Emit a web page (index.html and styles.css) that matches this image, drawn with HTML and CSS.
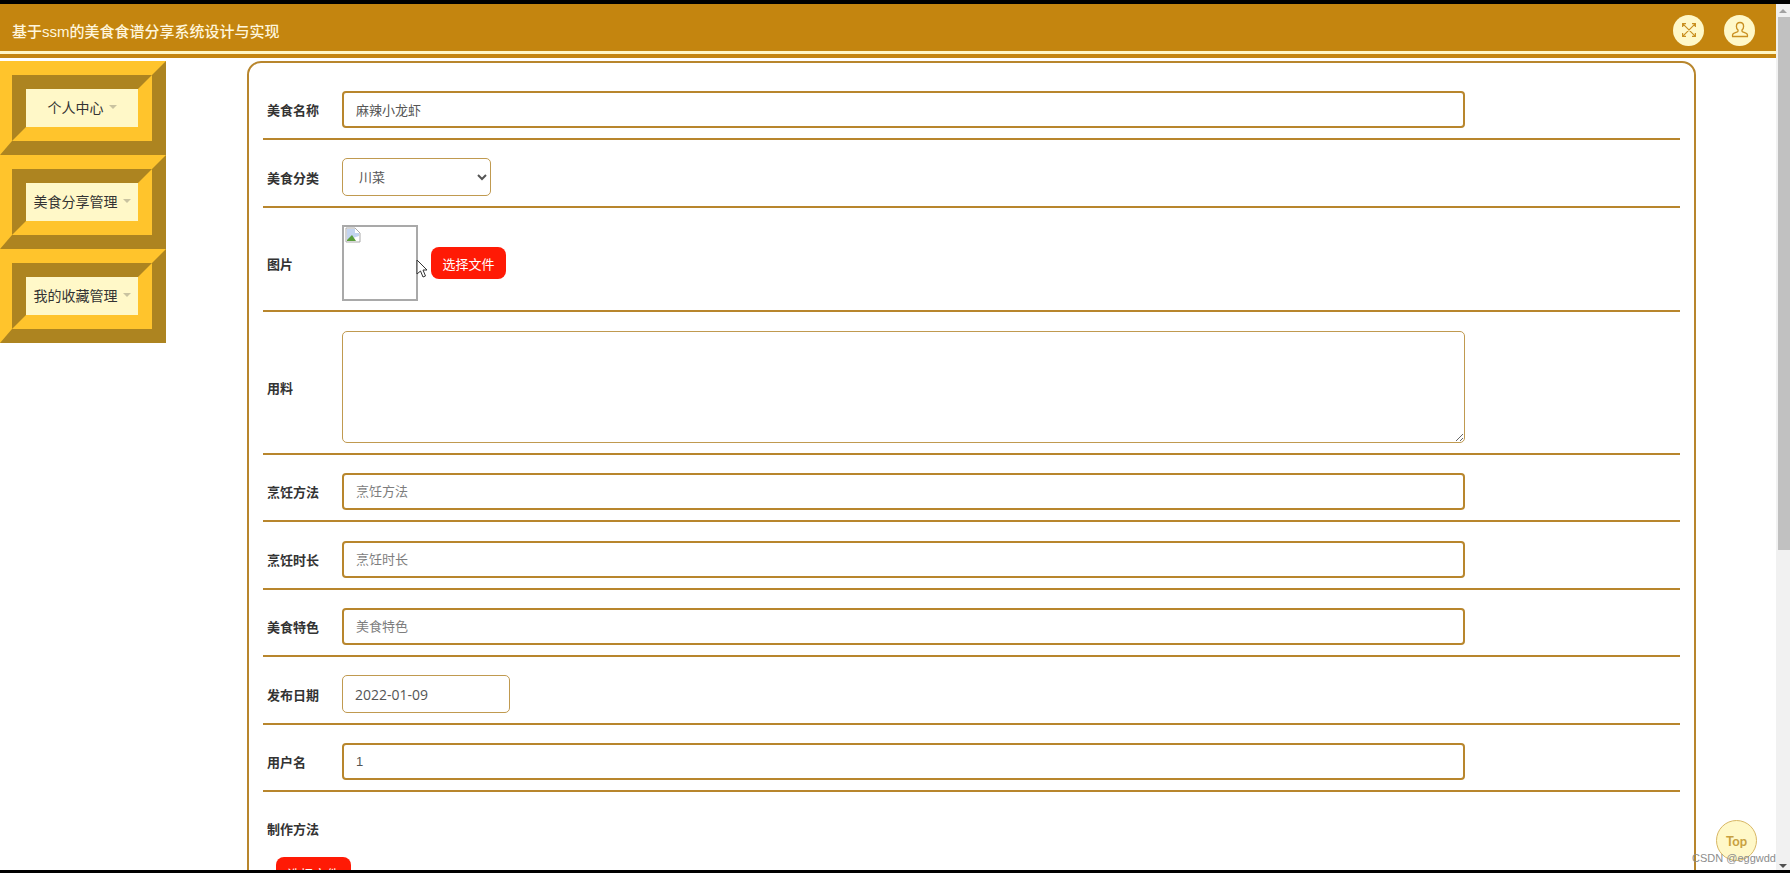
FILE: index.html
```html
<!DOCTYPE html>
<html lang="en">
<head>
    <meta charset="UTF-8">
    <meta name="viewport" content="width=device-width, initial-scale=1.0">
    <title>美食食谱分享系统</title>
    <link rel="stylesheet" href="styles.css">
</head>
<body>
    <div class="screen">
        <div class="page">
            <div class="viewport">
                <header class="topbar">
                    <div class="brand">基于ssm的美食食谱分享系统设计与实现</div>
                    <div class="top-actions">
                        <span class="round-icon">
                            <svg viewBox="0 0 24 24" width="18" height="18"><path d="M3.500 3.500l17 17M20.500 3.500l-17 17M3.500 8V3.500H8M16 3.500h4.500V8M3.500 16v4.500H8M20.500 16v4.500H16"/></svg>
                        </span>
                        <span class="round-icon">
                            <svg viewBox="0 0 24 24" width="20" height="20"><path d="M12 3c-2.600 0-4.300 2-4.300 4.700 0 1.900.8 3.400 1.900 4.400v1.400c0 1-4.900 1.700-6.100 3.300-.6.900-.6 2-.4 3h17.800c.2-1 .2-2.100-.4-3-1.200-1.600-6.100-2.300-6.100-3.300v-1.400c1.100-1 1.900-2.500 1.900-4.400C16.300 5 14.600 3 12 3z"/></svg>
                        </span>
                    </div>
                </header>
                <div class="topbar-stripe"></div>

                <div class="layout">
                    <nav class="sidebar">
                        <div class="menu-item"><div class="menu-inner"><div class="menu-label">个人中心<span class="caret"></span></div></div></div>
                        <div class="menu-item"><div class="menu-inner"><div class="menu-label">美食分享管理<span class="caret"></span></div></div></div>
                        <div class="menu-item"><div class="menu-inner"><div class="menu-label">我的收藏管理<span class="caret"></span></div></div></div>
                    </nav>

                    <main class="card">
                        <div class="row row-first">
                            <label class="row-label">美食名称</label>
                            <input class="field" type="text" value="麻辣小龙虾">
                        </div>
                        <div class="row">
                            <label class="row-label">美食分类</label>
                            <select class="field-thin select-box">
                                <option>川菜</option>
                            </select>
                        </div>
                        <div class="row row-image">
                            <label class="row-label">图片</label>
                            <div class="image-box">
                                <svg class="broken-img" viewBox="0 0 16 16" width="16" height="16">
                                    <path d="M1 1h9l5 5v9H1z" fill="#fff" stroke="#a9a9a9"/>
                                    <path d="M2 2h8v4h4v3L2 13z" fill="#c3d4ef"/>
                                    <path d="M2 14v-1l5-5 4 6z" fill="#5a9e3d"/>
                                </svg>
                            </div>
                            <button class="upload-btn" type="button">选择文件</button>
                            <svg class="mouse-cursor" viewBox="0 0 12 19" width="12" height="19">
                                <path d="M1 1v14l3.500-3 2.500 6 2.500-1-2.500-6H11z" fill="#fff" stroke="#333" stroke-width="1"/>
                            </svg>
                        </div>
                        <div class="row row-textarea">
                            <label class="row-label">用料</label>
                            <textarea class="field-thin text-box"></textarea>
                        </div>
                        <div class="row">
                            <label class="row-label">烹饪方法</label>
                            <input class="field" type="text" placeholder="烹饪方法">
                        </div>
                        <div class="row">
                            <label class="row-label">烹饪时长</label>
                            <input class="field" type="text" placeholder="烹饪时长">
                        </div>
                        <div class="row">
                            <label class="row-label">美食特色</label>
                            <input class="field" type="text" placeholder="美食特色">
                        </div>
                        <div class="row">
                            <label class="row-label">发布日期</label>
                            <input class="field-thin date-box" type="text" value="2022-01-09">
                        </div>
                        <div class="row">
                            <label class="row-label">用户名</label>
                            <input class="field" type="text" value="1">
                        </div>
                        <div class="row-editor">
                            <label class="row-label">制作方法</label>
                            <button class="upload-btn upload-editor" type="button">选择文件</button>
                        </div>
                    </main>
                </div>

                <a class="back-top">Top</a>
                <div class="watermark">CSDN @eggwdd</div>
            </div>

            <div class="scrollbar">
                <span class="arrow arrow-up"></span>
                <div class="thumb"></div>
                <span class="arrow arrow-down"></span>
            </div>
        </div>
    </div>
</body>
</html>
```

FILE: styles.css
```css
* {
    box-sizing: border-box;
}
html, body {
    margin: 0;
    padding: 0;
    height: 100%;
    overflow: hidden;
}
body {
    font-family: "Liberation Sans", "Noto Sans CJK SC", sans-serif;
    background: #000;
    color: #333;
}
.screen {
    height: 873px;
    padding: 4px 0 3px;
    background: #000;
}
.page {
    display: flex;
    height: 100%;
    background: #fff;
}
.viewport {
    position: relative;
    flex: 1;
    min-width: 0;
    overflow: hidden;
}

/* top bar */
.topbar {
    display: flex;
    justify-content: space-between;
    align-items: center;
    height: 47px;
    padding: 5px 21px 0 12px;
    background: #c4850f;
}
.brand {
    font-size: 15px;
    font-weight: 500;
    color: #fff6dc;
}
.top-actions {
    display: flex;
    gap: 20px;
}
.round-icon {
    display: flex;
    align-items: center;
    justify-content: center;
    width: 31px;
    height: 31px;
    border-radius: 50%;
    background: #fff8c8;
}
.round-icon svg {
    fill: none;
    stroke: #c98f20;
    stroke-width: 1.6;
}
.topbar-stripe {
    height: 7px;
    border-top: 3px solid #fff6c4;
    background: #c4850f;
}

/* sidebar + form */
.layout {
    display: flex;
    align-items: flex-start;
    padding-top: 3px;
}
.sidebar {
    flex: 0 0 247px;
}
.menu-item {
    width: 166px;
    height: 94px;
    border-style: solid;
    border-width: 14px;
    border-left-width: 12px;
    border-color: #ffc42c #ad8420 #ad8420 #ffc42c;
}
.menu-inner {
    height: 100%;
    border: 14px solid;
    border-color: #ad8420 #ffc42c #ffc42c #ad8420;
}
.menu-label {
    display: flex;
    align-items: center;
    justify-content: center;
    height: 100%;
    padding-bottom: 3px;
    background: #fff8c8;
    font-size: 14px;
    color: #333;
}
.caret {
    margin-left: 5px;
    border-style: solid;
    border-width: 4px 4px 0;
    border-color: #c9c3a0 transparent transparent;
}
.card {
    width: 1449px;
    height: 900px;
    padding: 0 14px;
    border: 2px solid #b8862d;
    border-radius: 14px;
    background: #fff;
}
.row {
    display: flex;
    align-items: center;
    height: 67.500px;
    padding-top: 9px;
    border-bottom: 2px solid #b8862d;
}
.row-first {
    height: 77px;
    padding-top: 18px;
}
.row-image {
    position: relative;
    height: 104px;
    padding-top: 9px;
}
.row-textarea {
    height: 143px;
    padding-top: 10px;
}
.row-label {
    flex: 0 0 79px;
    padding-left: 4px;
    font-size: 13px;
    font-weight: 700;
    color: #333;
}
.field {
    width: 1123px;
    height: 37px;
    padding: 0 12px;
    border: 2px solid #b8862d;
    border-radius: 4px;
    background: #fff;
    font: 13px "Liberation Sans", "Noto Sans CJK SC", sans-serif;
    color: #555;
    outline: none;
}
.field::placeholder {
    color: #7d7d7d;
}
.field-thin {
    border: 1px solid #c09a50;
    border-radius: 5px;
    background: #fff;
    font: 13px "Liberation Sans", "Noto Sans CJK SC", sans-serif;
    color: #555;
    outline: none;
}
.select-box {
    width: 149px;
    height: 38px;
    padding-left: 12px;
}
.text-box {
    display: block;
    width: 1123px;
    height: 112px;
}
.date-box {
    width: 168px;
    height: 38px;
    padding: 0 12px;
    font: 14px "Open Sans", sans-serif;
}
.image-box {
    position: relative;
    width: 76px;
    height: 76px;
    border: 2px solid #a9a9a9;
}
.broken-img {
    position: absolute;
    top: 0;
    left: 1px;
}
.upload-btn {
    height: 32px;
    width: 75px;
    margin-left: 13px;
    padding: 0;
    border: none;
    border-radius: 8px;
    background: #ff1a05;
    font: 13px "Liberation Sans", "Noto Sans CJK SC", sans-serif;
    color: #fff;
}
.mouse-cursor {
    position: absolute;
    top: 51px;
    left: 153px;
}
.row-editor {
    padding-top: 27px;
}
.row-editor .row-label {
    display: block;
}
.upload-editor {
    display: block;
    margin: 19px 0 0 13px;
}

/* floating bits */
.back-top {
    position: absolute;
    right: 19px;
    bottom: 9px;
    display: flex;
    align-items: center;
    justify-content: center;
    width: 41px;
    height: 41px;
    border: 1px solid #d8b765;
    border-radius: 50%;
    background: #fff8c8;
    font: 700 13px Lato, sans-serif;
    color: #c8a040;
}
.watermark {
    position: absolute;
    right: 0;
    bottom: 6px;
    font: 11px "Liberation Sans", sans-serif;
    color: #8d8d8d;
}

/* scrollbar */
.scrollbar {
    position: relative;
    flex: 0 0 14px;
    background: #f1f1f1;
}
.thumb {
    position: absolute;
    top: 13px;
    left: 2px;
    right: 0;
    height: 533px;
    background: #c1c1c1;
}
.arrow {
    position: absolute;
    left: 3px;
    border-style: solid;
    border-color: transparent;
}
.arrow-up {
    top: 5px;
    border-width: 0 4px 4px;
    border-bottom-color: #a3a3a3;
}
.arrow-down {
    bottom: 2px;
    border-width: 4px 4px 0;
    border-top-color: #505050;
}
```
